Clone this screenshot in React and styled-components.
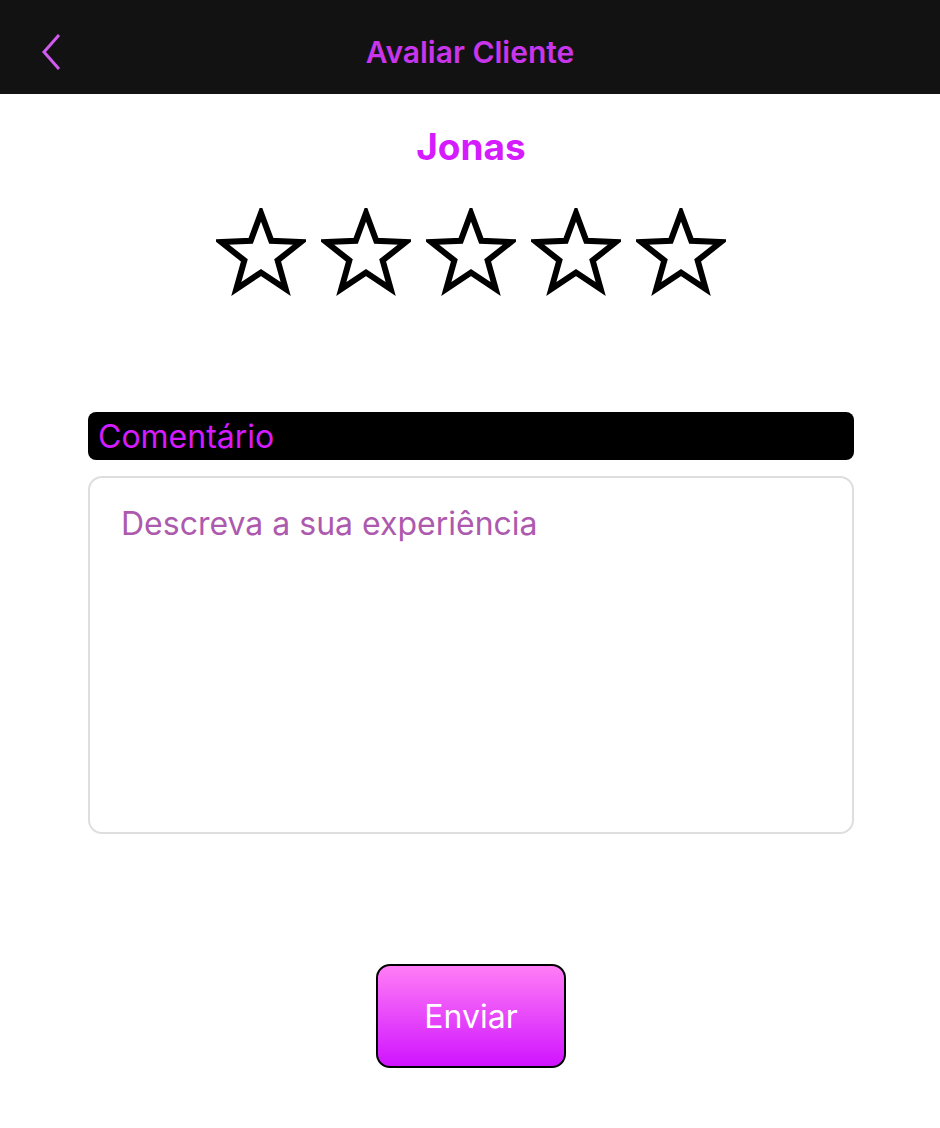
import React, {useState} from 'react';
import styled, {createGlobalStyle} from 'styled-components';

const Global = createGlobalStyle`
body{
margin:0;
background:#FFFFFF;
font-family:Inter, "Noto Sans", sans-serif;
}
`
const Page = styled.div`
width:940px;
min-height:1128px;
display:flex;
flex-direction:column;
background:#FFFFFF;
`
const Header = styled.div`
box-sizing:border-box;
height:94px;
padding-top:10px;
display:grid;
grid-template-columns:1fr auto 1fr;
align-items:center;
background:#121212;
`
const Back = styled.button`
justify-self:start;
margin-left:36px;
padding:4px;
border:none;
background:none;
display:flex;
cursor:pointer;
`
const HeaderTitle = styled.h1`
margin:0;
font-size:30px;
font-weight:600;
color:#c935ea;
`
const Main = styled.div`
display:flex;
flex-direction:column;
align-items:center;
padding:0 86px 0 88px;
`
const Name = styled.h2`
margin:30px 0 0;
font-size:37px;
line-height:46px;
font-weight:700;
color:#d41cff;
`
const Stars = styled.div`
display:flex;
gap:15px;
margin-top:38px;
`
const StarButton = styled.button`
border:none;
background:none;
padding:0;
display:flex;
cursor:pointer;
`
const Label = styled.div`
align-self:stretch;
margin-top:114px;
height:48px;
display:flex;
align-items:center;
padding:0 10px;
background:#000000;
border-radius:8px;
font-size:32px;
color:#d41cff;
`
const TextArea = styled.textarea`
align-self:stretch;
box-sizing:border-box;
margin-top:16px;
height:358px;
padding:26px 31px;
border:2px solid #dedede;
border-radius:14px;
resize:none;
outline:none;
font-family:Inter, "Noto Sans", sans-serif;
font-size:32px;
color:#333333;
&::placeholder{
color:#ad5aae;
}
`
const Submit = styled.button`
margin-top:130px;
width:190px;
height:104px;
border:2px solid #000000;
border-radius:14px;
background:linear-gradient(180deg, #ff7df6 0%, #d014ff 100%);
font-family:Inter, "Noto Sans", sans-serif;
font-size:32px;
color:#FFFFFF;
cursor:pointer;
`

const starPoints = () => {
    const cx = 45, cy = 47, R = 42, r = 17.5;
    const pts = [];
    for(let i = 0; i < 10; i++){
        const rad = i % 2 === 0 ? R : r;
        const a = -Math.PI / 2 + i * Math.PI / 5;
        pts.push(`${(cx + rad * Math.cos(a)).toFixed(2)},${(cy + rad * Math.sin(a)).toFixed(2)}`);
    }
    return pts.join(' ');
}

const Star = ({filled}) => (
    <svg width="90" height="90" viewBox="0 0 90 90">
        <polygon points={starPoints()} fill={filled ? '#d41cff' : 'none'} stroke="#000000" strokeWidth="6" strokeLinejoin="miter"/>
    </svg>
)

const App = () => {
    const [rating, setRating] = useState(0);
    const [text, setText] = useState('');

    return <Page>
        <Global/>
        <Header>
            <Back>
                <svg width="26" height="38" viewBox="0 0 26 38">
                    <polyline points="19,2 4,19 19,36" fill="none" stroke="#d25af0" strokeWidth="3"/>
                </svg>
            </Back>
            <HeaderTitle>Avaliar Cliente</HeaderTitle>
            <div/>
        </Header>
        <Main>
            <Name>Jonas</Name>
            <Stars>
                {[1,2,3,4,5].map(n =>
                    <StarButton key={n} onClick={() => setRating(n)}>
                        <Star filled={n <= rating}/>
                    </StarButton>
                )}
            </Stars>
            <Label>Comentário</Label>
            <TextArea placeholder="Descreva a sua experiência" value={text} onChange={e => setText(e.target.value)}/>
            <Submit>Enviar</Submit>
        </Main>
    </Page>
}

export default App;
